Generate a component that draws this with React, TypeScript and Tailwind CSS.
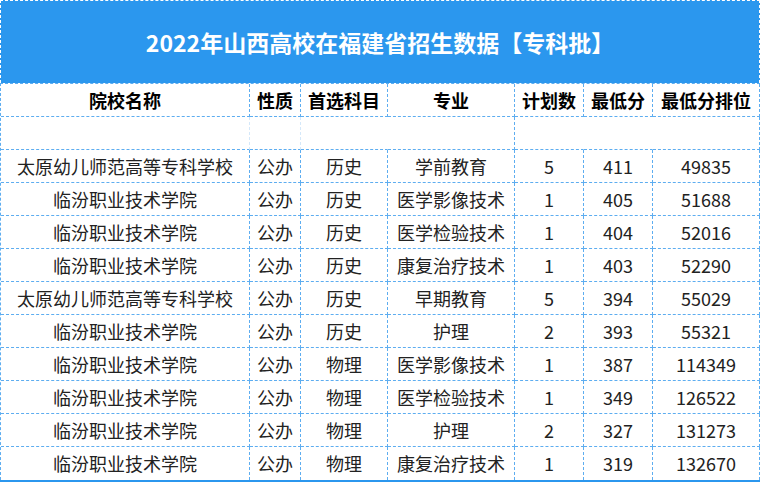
import React from 'react';

const cols = ['院校名称', '性质', '首选科目', '专业', '计划数', '最低分', '最低分排位'];

const rows: string[][] = [
  ['太原幼儿师范高等专科学校', '公办', '历史', '学前教育', '5', '411', '49835'],
  ['临汾职业技术学院', '公办', '历史', '医学影像技术', '1', '405', '51688'],
  ['临汾职业技术学院', '公办', '历史', '医学检验技术', '1', '404', '52016'],
  ['临汾职业技术学院', '公办', '历史', '康复治疗技术', '1', '403', '52290'],
  ['太原幼儿师范高等专科学校', '公办', '历史', '早期教育', '5', '394', '55029'],
  ['临汾职业技术学院', '公办', '历史', '护理', '2', '393', '55321'],
  ['临汾职业技术学院', '公办', '物理', '医学影像技术', '1', '387', '114349'],
  ['临汾职业技术学院', '公办', '物理', '医学检验技术', '1', '349', '126522'],
  ['临汾职业技术学院', '公办', '物理', '护理', '2', '327', '131273'],
  ['临汾职业技术学院', '公办', '物理', '康复治疗技术', '1', '319', '132670'],
];

// which cells in the blank row keep a visible right-hand line
const blankLines = ['faint', 'faint', 'none', 'line', 'none', 'none', 'line'];

const grid = 'grid grid-cols-[249px_51px_87px_127px_69px_69px_107px]';
const cell = 'h-[33px] flex items-center justify-center border-dashed border-[#5dadf0] whitespace-nowrap';

export default function App() {
  return (
    <div
      className="w-[760px] h-[482px] overflow-hidden bg-white"
      style={{ fontFamily: '"Noto Sans CJK SC", "Noto Sans", sans-serif' }}
    >
      {/* Title */}
      <div className="h-[83px] bg-[#2b97ee] border-t border-l border-r border-dashed border-white flex items-center justify-center">
        <h1 className="text-white font-bold text-[23px] leading-none">
          2022年山西高校在福建省招生数据【专科批】
        </h1>
      </div>

      {/* Table */}
      <div className={`${grid} border-t border-l border-dashed border-[#5dadf0]`}>
        {cols.map((c) => (
          <div key={c} className={`${cell} border-r border-b font-bold text-[18px] text-black`}>
            {c}
          </div>
        ))}

        {blankLines.map((b, i) => (
          <div
            key={'blank' + i}
            className={`${cell} border-b ${
              b === 'line' ? 'border-r' : b === 'faint' ? 'border-r border-r-[#d4e8fa]' : 'border-r border-r-transparent'
            }`}
          />
        ))}

        {rows.map((r, ri) =>
          r.map((v, ci) => (
            <div
              key={ri + '-' + ci}
              className={`${cell} border-r ${ri === rows.length - 1 ? 'h-[32px]' : 'border-b'} text-[18px] text-[#222222]`}
            >
              {v}
            </div>
          ))
        )}
      </div>
      <div className="h-[3px] bg-[#2b97ee]" />
    </div>
  );
}
